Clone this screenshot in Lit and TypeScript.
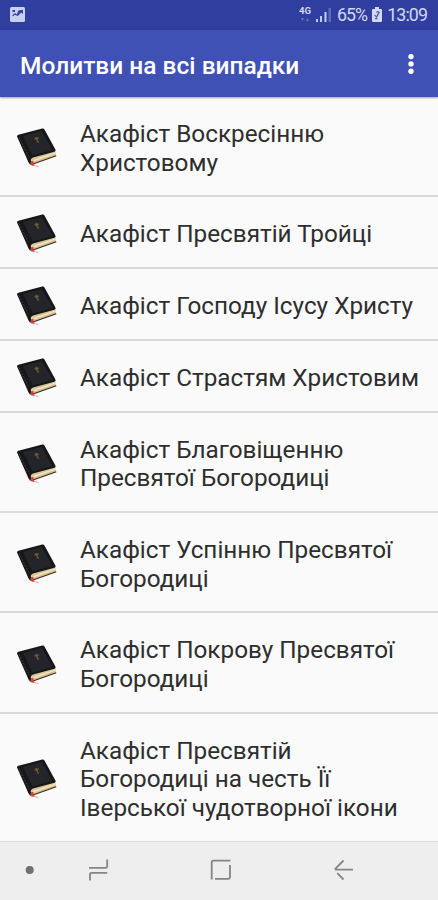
import { LitElement, html, css, svg } from "lit";
import { customElement, property } from "lit/decorators.js";

const PRAYERS: string[][] = [
  ["Акафіст Воскресінню", "Христовому"],
  ["Акафіст Пресвятій Тройці"],
  ["Акафіст Господу Ісусу Христу"],
  ["Акафіст Страстям Христовим"],
  ["Акафіст Благовіщенню", "Пресвятої Богородиці"],
  ["Акафіст Успінню Пресвятої", "Богородиці"],
  ["Акафіст Покрову Пресвятої", "Богородиці"],
  ["Акафіст Пресвятій", "Богородиці на честь Її", "Іверської чудотворної ікони"],
];

const bookIcon = svg`
  <path d="M12 29.5 L13.5 36.2 L39 27.4 L38 22 Z" fill="#dcc594"/>
  <path d="M14.4 33.4 L38.2 25" stroke="#f6e9c8" stroke-width="1.3" fill="none"/>
  <path d="M0 8.6 Q-.2 7.2 1.4 6.8 L25.2 .6 Q26.8 .2 27.6 1.7 L38.4 21.6 Q39.2 23.3 37.4 23.8 L17 29.2 Q13.6 30.2 13.8 32.4 L14.8 36.4 L13 36.6 Q11 34 9.8 30.4 Z" fill="#17171a"/>
  <path d="M6 8 L24.8 3 L35.4 22 L15.6 27.4 Z" fill="#24252b"/>
  <path d="M2 9.5 L12.4 30" stroke="#47474c" stroke-width=".8" stroke-dasharray="2 1.2" fill="none"/>
  <path d="M14.5 36.4 L39.2 27.7" stroke="#2a2420" stroke-width="1.1" fill="none"/>
  <path d="M18.8 9 L21.4 14.8 M17.6 11.2 L21.8 9.8" stroke="#7d5c30" stroke-width="1.4" fill="none"/>
  <path d="M14 33.4 L16.2 32.6 L17 36.2 L18 38 L14.6 37.6 L13.2 36.2 Z" fill="#d0433b"/>
  <path d="M17 37.4 L21.5 38.6" stroke="#eda3a0" stroke-width="1" fill="none"/>
`;

@customElement("prayer-row")
export class PrayerRow extends LitElement {
  @property({ attribute: false }) lines: string[] = [];

  static styles = css`
    :host {
      display: flex;
      align-items: center;
      box-sizing: border-box;
      padding: 22px 0 18.2px 17px;
      border-bottom: 2px solid #d9d9d9;
    }
    .book {
      flex: none;
      width: 40px;
      height: 40px;
      margin: -8px 23px -8px 0;
      overflow: visible;
    }
    .label {
      padding-top: 1px;
      font-size: 24.3px;
      line-height: 28.6px;
      color: #2e2e2e;
      white-space: nowrap;
    }
    .line {
      display: block;
    }
  `;

  render() {
    return html`
      <svg class="book" viewBox="0 0 40 40">${bookIcon}</svg>
      <div class="label">${this.lines.map((l) => html`<span class="line">${l}</span>`)}</div>
    `;
  }
}

@customElement("app-root")
export class AppRoot extends LitElement {
  static styles = css`
    :host {
      display: flex;
      flex-direction: column;
      width: 438px;
      height: 900px;
      overflow: hidden;
      background: #fafafa;
      font-family: Roboto, "Noto Sans", sans-serif;
    }
    .status {
      flex: none;
      display: flex;
      align-items: center;
      height: 30px;
      box-sizing: border-box;
      padding: 0 11px 1px 10px;
      background: #303f9f;
      color: #d3d8f4;
      font-size: 17.8px;
      letter-spacing: -0.9px;
    }
    .photo { width: 15px; height: 15px; margin-right: auto; }
    .net { width: 12px; height: 16px; margin-right: 5px; letter-spacing: 0; }
    .signal { width: 15px; height: 15px; margin-right: 6px; }
    .battery { width: 10px; height: 15px; margin: 0 5px 0 5px; }
    .percent, .clock { white-space: nowrap; }
    .bar {
      flex: none;
      display: flex;
      align-items: center;
      justify-content: space-between;
      height: 67px;
      box-sizing: border-box;
      padding: 2px 23px 0 20px;
      background: #3f51b5;
      box-shadow: 0 1px 2px rgba(0, 0, 0, 0.35);
      z-index: 1;
    }
    .title {
      margin: 0;
      padding-top: 1px;
      font-size: 24.5px;
      font-weight: 500;
      color: #fff;
      white-space: nowrap;
    }
    .more { width: 8px; height: 24px; }
    .list { flex: 1; min-height: 0; overflow: hidden; }
    .nav {
      flex: none;
      height: 59px;
      box-sizing: border-box;
      border-top: 1px solid #dcdcdc;
      background: #eeeeee;
    }
    .keys { display: block; width: 438px; height: 58px; }
  `;

  render() {
    return html`
      <div class="status">
        <svg class="photo" viewBox="0 0 15 15">
          <rect width="15" height="15" rx="1.5" fill="#c9cff0" />
          <path d="M2.5 3H5V5H2.5Z M2.5 8L5 6L7 7.5L8 4L10 3H13V7L11 5.5L9 8L7.5 9L5 7.8L2.5 9.5Z" fill="#34429f" />
        </svg>
        <svg class="net" viewBox="0 0 12 16">
          <text x="0" y="7.2" font-size="8.4" font-weight="700" fill="#d3d8f4" textLength="12" lengthAdjust="spacingAndGlyphs">4G</text>
          <path d="M2 11H5L3.5 14Z M7 14H10L8.5 11Z" fill="#6672bd" />
        </svg>
        <svg class="signal" viewBox="0 0 15 15">
          <path d="M0 12H2V15H0Z M4 9H6V15H4Z M8.5 5H10.5V15H8.5Z" fill="#c3caef" />
          <path d="M12.5 1H15V15H12.5Z" fill="#5d6bbb" />
        </svg>
        <span class="percent">65%</span>
        <svg class="battery" viewBox="0 0 10 16" preserveAspectRatio="none">
          <path d="M3 0H7V2H9Q10 2 10 3V15Q10 16 9 16H1Q0 16 0 15V3Q0 2 1 2H3Z" fill="#d3d8f4" />
          <path d="M7.4 5L4.6 10.6L2.6 8.6 M3 12.4H5.4 M4.4 5.4L6.6 5" stroke="#4a57a8" stroke-width="1.3" fill="none" />
        </svg>
        <span class="clock">13:09</span>
      </div>
      <div class="bar">
        <h1 class="title">Молитви на всі випадки</h1>
        <svg class="more" viewBox="0 0 8 24" fill="#fff">
          <circle cx="4" cy="3.6" r="2.7" /><circle cx="4" cy="10.9" r="2.7" /><circle cx="4" cy="18.2" r="2.7" />
        </svg>
      </div>
      <div class="list">${PRAYERS.map((lines) => html`<prayer-row .lines=${lines}></prayer-row>`)}</div>
      <div class="nav">
        <svg class="keys" viewBox="0 842 438 58" fill="none" stroke="#858585" stroke-width="1.8">
          <circle cx="29.7" cy="870" r="4" fill="#707070" stroke="none" />
          <path d="M89 867.8H105.5Q107.2 867.8 107.2 866V859.5 M107.2 872.8H91.5Q90 872.8 90 874.5V880.5" />
          <path d="M230.5 860.6H213.5Q211.7 860.6 211.7 862.4V879.5 M215 878.8H228Q230 878.8 230 877V865" />
          <path d="M353 869.7H335 M343.5 860.5L334.8 869.3 M337.3 873.2L343.5 879.5" />
        </svg>
      </div>
    `;
  }
}
